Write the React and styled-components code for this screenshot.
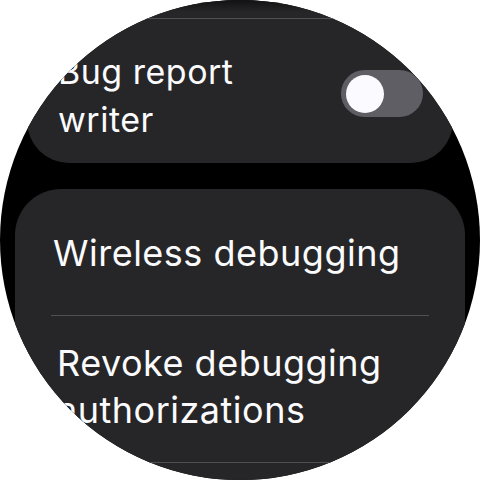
import React, { useState } from 'react'
import styled, { createGlobalStyle } from 'styled-components';

const GlobalStyle = createGlobalStyle`
    html, body {
        margin: 0;
        padding: 0;
        background: #ffffff;
    }
`;

function Toggle({ on, onChange }) {
    return (
        <Track $on={on} onClick={() => onChange(!on)}>
            <Thumb $on={on} />
        </Track>
    )
}

function App() {
    const [bugWriter, setBugWriter] = useState(false);

    return (
        <>
            <GlobalStyle />
            <Screen>
                <List>
                    <Card $inset={27} $radius={42}>
                        <Item $pad="30px 34px 28px">
                            <Label $size={34} $lh={48} $nowrap>Bug report</Label>
                        </Item>
                        <Divider $inset={34} />
                        <Item $pad="29px 30px 19px 31px" className="switch-row">
                            <Label $size={34} $lh={48} $max={200}>Bug report writer</Label>
                            <Toggle on={bugWriter} onChange={setBugWriter} />
                        </Item>
                    </Card>
                    <Card $inset={15} $radius={46}>
                        <Item $pad="41px 38px 38px">
                            <Label $size={36} $lh={47}>Wireless debugging</Label>
                        </Item>
                        <Divider $inset={36} />
                        <Item $pad="24px 38px 28px 42px">
                            <Label $size={36} $lh={47}>Revoke debugging authorizations</Label>
                        </Item>
                        <Divider $inset={36} />
                        <Item $pad="34px 38px 28px">
                            <Label $size={36} $lh={47}>Debug over Wi-Fi</Label>
                        </Item>
                    </Card>
                </List>
            </Screen>
        </>
    )
}

const Screen = styled.div`
    position: relative;
    width: 480px;
    height: 480px;
    border-radius: 50%;
    overflow: hidden;
    background-color: #000000;
    font-family: Inter, "Noto Sans", sans-serif;
    color: #fbfbfe;
    &::before {
        content: '';
        position: absolute;
        top: 0;
        left: 0;
        right: 0;
        height: 12px;
        background: linear-gradient(rgba(0, 0, 0, 0.55), rgba(0, 0, 0, 0));
        pointer-events: none;
        z-index: 2;
    }
`;

const List = styled.div`
    display: flex;
    flex-direction: column;
    gap: 26px;
    margin-top: -88px;
`;

const Card = styled.div`
    margin: 0 ${p => p.$inset}px;
    background-color: #262628;
    border-radius: ${p => p.$radius}px;
    display: flex;
    flex-direction: column;
    .switch-row {
        justify-content: space-between;
    }
`;

const Item = styled.div`
    display: flex;
    align-items: center;
    gap: 16px;
    padding: ${p => p.$pad};
`;

const Label = styled.div`
    font-size: ${p => p.$size}px;
    line-height: ${p => p.$lh}px;
    font-weight: 400;
    letter-spacing: 0.5px;
    ${p => p.$max && `max-width: ${p.$max}px;`}
    ${p => p.$nowrap && `white-space: nowrap;`}
`;

const Divider = styled.div`
    height: 1px;
    margin: 0 ${p => p.$inset}px;
    background-color: #505053;
`;

const Track = styled.div`
    flex: none;
    width: 82px;
    height: 47px;
    margin-bottom: 5px;
    border-radius: 24px;
    background-color: ${p => p.$on ? '#a8c7fa' : '#5f5e64'};
    display: flex;
    align-items: center;
    justify-content: ${p => p.$on ? 'flex-end' : 'flex-start'};
    padding: 0 5px;
    box-sizing: border-box;
    cursor: pointer;
`;

const Thumb = styled.div`
    width: 38px;
    height: 38px;
    border-radius: 50%;
    background-color: ${p => p.$on ? '#062e6f' : '#fbfbff'};
`;

export default App
